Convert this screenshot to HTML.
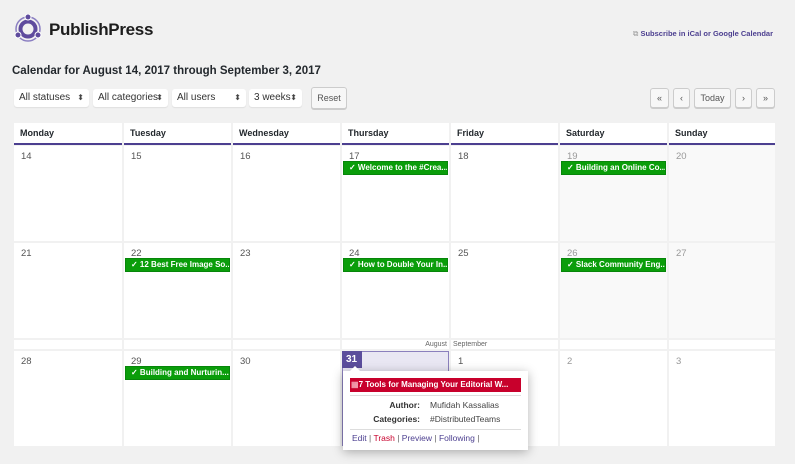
<!DOCTYPE html>
<html><head><meta charset="utf-8"><style>
*{box-sizing:border-box;margin:0;padding:0}
body{width:795px;height:464px;background:#f1f1f1;font-family:"Liberation Sans",sans-serif;position:relative;overflow:hidden;color:#23282d}
.a{position:absolute}
.sel{position:absolute;top:89px;height:18px;background:#fff;border-radius:3px;box-shadow:0 1px 1px rgba(0,0,0,.08);font-size:10px;color:#333;padding:3px 5px;line-height:12px;white-space:nowrap;overflow:hidden}
.sel:after{content:"⬍";position:absolute;right:5px;top:3px;font-size:8px;color:#444}
.btn{position:absolute;top:88px;height:20px;border:1px solid #ccc;border-radius:3px;background:#f7f7f7;font-size:9px;color:#555;text-align:center;line-height:18px;box-shadow:0 1px 0 #ccc}
.hd{position:absolute;top:123px;background:#fff;font-size:9px;font-weight:bold;padding:5px 6px;border-bottom:2px solid #4c3f90;height:22px}
.c{position:absolute;background:#fff}
.c.w{background:#f9f9f9}
.n{position:absolute;font-size:9.5px;color:#555;left:7px;top:5px}
.w .n{color:#999}
.ev{position:absolute;left:1px;right:1px;height:14px;background:#0a9d0a;border:1px solid #07860a;color:#fff;font-size:8px;font-weight:bold;line-height:12px;padding-left:5px;white-space:nowrap;overflow:hidden}
</style></head><body>
<svg class="a" style="left:13px;top:14px" width="30" height="30" viewBox="0 0 30 30">
<circle cx="15" cy="15" r="12" fill="none" stroke="#8b7fc2" stroke-width="1.5"/>
<circle cx="15" cy="15" r="7.5" fill="none" stroke="#5e4b9d" stroke-width="4"/>
<circle cx="15" cy="3" r="3" fill="#5e4b9d" stroke="#fff" stroke-width="1"/>
<circle cx="5" cy="21" r="3" fill="#5e4b9d" stroke="#fff" stroke-width="1"/>
<circle cx="25" cy="21" r="3" fill="#5e4b9d" stroke="#fff" stroke-width="1"/>
</svg>
<div class="a" style="left:49px;top:20px;font-size:17px;font-weight:bold;color:#1d1d1d;letter-spacing:-.3px">PublishPress</div>
<div class="a" style="right:22px;top:29px;font-size:7.5px;color:#4c3f90;font-weight:bold;white-space:nowrap"><span style="color:#999;font-weight:normal">⧉</span> Subscribe in iCal or Google Calendar</div>
<div class="a" style="left:12px;top:65px;font-size:11.5px;font-weight:bold;color:#23282d">Calendar for August 14, 2017 through September 3, 2017</div>
<div class="sel" style="left:14px;width:75px">All statuses</div>
<div class="sel" style="left:93px;width:75px">All categories</div>
<div class="sel" style="left:172px;width:74px">All users</div>
<div class="sel" style="left:249px;width:53px">3 weeks</div>
<div class="btn" style="left:311px;width:36px;top:87px;height:22px;line-height:20px">Reset</div>
<div class="btn" style="left:650px;width:19px">«</div>
<div class="btn" style="left:673px;width:17px">‹</div>
<div class="btn" style="left:694px;width:37px">Today</div>
<div class="btn" style="left:735px;width:17px">›</div>
<div class="btn" style="left:756px;width:19px">»</div>

<div class="hd" style="left:14px;width:108px">Monday</div>
<div class="hd" style="left:124px;width:107px">Tuesday</div>
<div class="hd" style="left:233px;width:107px">Wednesday</div>
<div class="hd" style="left:342px;width:107px">Thursday</div>
<div class="hd" style="left:451px;width:107px">Friday</div>
<div class="hd" style="left:560px;width:107px">Saturday</div>
<div class="hd" style="left:669px;width:106px">Sunday</div>

<div class="c" style="left:14px;top:146px;width:108px;height:95px"><span class="n">14</span></div>
<div class="c" style="left:124px;top:146px;width:107px;height:95px"><span class="n">15</span></div>
<div class="c" style="left:233px;top:146px;width:107px;height:95px"><span class="n">16</span></div>
<div class="c" style="left:342px;top:146px;width:107px;height:95px"><span class="n">17</span><div class="ev" style="top:15px">✓ Welcome to the #Crea...</div></div>
<div class="c" style="left:451px;top:146px;width:107px;height:95px"><span class="n">18</span></div>
<div class="c w" style="left:560px;top:146px;width:107px;height:95px"><span class="n">19</span><div class="ev" style="top:15px">✓ Building an Online Co...</div></div>
<div class="c w" style="left:669px;top:146px;width:106px;height:95px"><span class="n">20</span></div>

<div class="c" style="left:14px;top:243px;width:108px;height:95px"><span class="n">21</span></div>
<div class="c" style="left:124px;top:243px;width:107px;height:95px"><span class="n">22</span><div class="ev" style="top:15px">✓ 12 Best Free Image So...</div></div>
<div class="c" style="left:233px;top:243px;width:107px;height:95px"><span class="n">23</span></div>
<div class="c" style="left:342px;top:243px;width:107px;height:95px"><span class="n">24</span><div class="ev" style="top:15px">✓ How to Double Your In...</div></div>
<div class="c" style="left:451px;top:243px;width:107px;height:95px"><span class="n">25</span></div>
<div class="c w" style="left:560px;top:243px;width:107px;height:95px"><span class="n">26</span><div class="ev" style="top:15px">✓ Slack Community Eng...</div></div>
<div class="c w" style="left:669px;top:243px;width:106px;height:95px"><span class="n">27</span></div>

<div class="c" style="left:14px;top:340px;width:108px;height:9px"></div>
<div class="c" style="left:124px;top:340px;width:107px;height:9px"></div>
<div class="c" style="left:233px;top:340px;width:107px;height:9px"></div>
<div class="c" style="left:342px;top:340px;width:107px;height:9px;font-size:7px;color:#666;text-align:right;padding-right:2px;line-height:9px">August</div>
<div class="c" style="left:451px;top:340px;width:107px;height:9px;font-size:7px;color:#666;padding-left:2px;line-height:9px">September</div>
<div class="c" style="left:560px;top:340px;width:107px;height:9px"></div>
<div class="c" style="left:669px;top:340px;width:106px;height:9px"></div>

<div class="c" style="left:14px;top:351px;width:108px;height:95px"><span class="n">28</span></div>
<div class="c" style="left:124px;top:351px;width:107px;height:95px"><span class="n">29</span><div class="ev" style="top:15px">✓ Building and Nurturin...</div></div>
<div class="c" style="left:233px;top:351px;width:107px;height:95px"><span class="n">30</span></div>
<div class="c" style="left:342px;top:351px;width:107px;height:95px;background:#e9e7f3;border:1px solid #8b80bd"></div>
<div class="a" style="left:342px;top:351px;width:20px;height:17px;background:#5b4d9c;color:#fff;font-size:10px;font-weight:bold;padding:3px 0 0 4px">31</div>
<div class="c" style="left:451px;top:351px;width:107px;height:95px"><span class="n">1</span></div>
<div class="c w" style="left:560px;top:351px;width:107px;height:95px;background:#fff"><span class="n">2</span></div>
<div class="c w" style="left:669px;top:351px;width:106px;height:95px;background:#fff"><span class="n">3</span></div>

<div class="a" style="left:343px;top:371px;width:185px;height:79px;background:#fff;box-shadow:0 2px 10px rgba(0,0,0,.3)">
<div class="a" style="left:7px;top:-5px;width:0;height:0;border-left:5px solid transparent;border-right:5px solid transparent;border-bottom:5px solid #fff"></div>
<div class="a" style="left:7px;top:7px;width:171px;height:14px;background:#c8002c;color:#fff;font-size:8px;font-weight:bold;line-height:14px;padding-left:1px;white-space:nowrap;overflow:hidden"><span style="color:#f2a0b0">▦</span>7 Tools for Managing Your Editorial W...</div>
<div class="a" style="left:7px;top:24px;width:171px;border-top:1px solid #ddd"></div>
<div class="a" style="left:0;top:29px;width:77px;text-align:right;font-size:8.5px;font-weight:bold;color:#333">Author:</div>
<div class="a" style="left:87px;top:29px;font-size:8.5px;color:#444">Mufidah Kassalias</div>
<div class="a" style="left:0;top:43px;width:77px;text-align:right;font-size:8.5px;font-weight:bold;color:#333">Categories:</div>
<div class="a" style="left:87px;top:43px;font-size:8.5px;color:#444">#DistributedTeams</div>
<div class="a" style="left:7px;top:58px;width:171px;border-top:1px solid #ddd"></div>
<div class="a" style="left:9px;top:62px;font-size:8.5px;color:#666"><span style="color:#4c3f90">Edit</span> | <span style="color:#c8002c">Trash</span> | <span style="color:#4c3f90">Preview</span> | <span style="color:#4c3f90">Following</span> |</div>
</div>
</body></html>
